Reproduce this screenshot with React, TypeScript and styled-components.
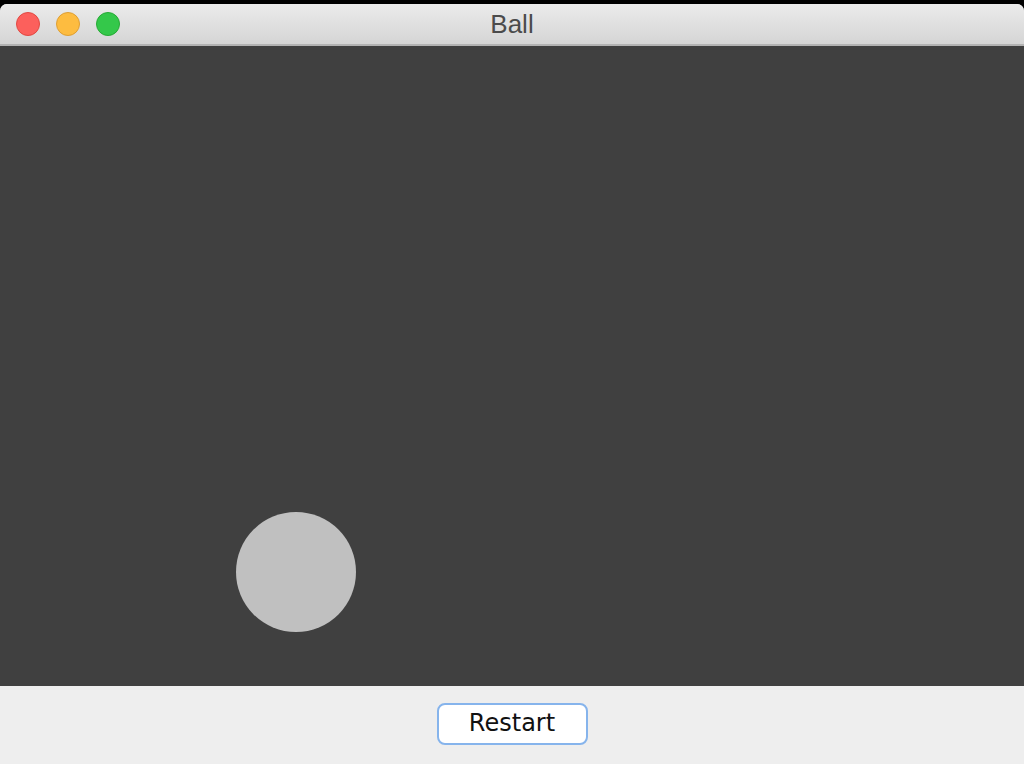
import React from 'react';
import styled, { createGlobalStyle } from 'styled-components';

const GlobalStyle = createGlobalStyle`
  html, body {
    margin: 0;
    padding: 0;
    background: #000;
    overflow: hidden;
  }
`;

const Window = styled.div`
  margin-top: 4px;
  width: 1024px;
  height: 760px;
  display: flex;
  flex-direction: column;
  border-radius: 7px 7px 0 0;
  overflow: hidden;
  background: #eeeeee;
`;

const TitleBar = styled.div`
  position: relative;
  height: 40px;
  flex-shrink: 0;
  display: flex;
  align-items: center;
  justify-content: center;
  background: linear-gradient(#ebebeb, #d5d5d5);
  border-bottom: 2px solid #b3b3b3;
`;

const Lights = styled.div`
  position: absolute;
  left: 16px;
  top: 8px;
  display: flex;
  gap: 16px;
`;

const Light = styled.span<{ $fill: string; $edge: string }>`
  width: 24px;
  height: 24px;
  border-radius: 50%;
  box-sizing: border-box;
  background: ${({ $fill }) => $fill};
  border: 1px solid ${({ $edge }) => $edge};
`;

const Title = styled.div`
  font-family: 'Liberation Sans', Arial, sans-serif;
  font-size: 26px;
  color: #4b4b4b;
  margin-top: 1px;
`;

const Canvas = styled.div`
  position: relative;
  height: 640px;
  flex-shrink: 0;
  background: #404040;
`;

const Ball = styled.div`
  position: absolute;
  border-radius: 50%;
  background: #c0c0c0;
`;

const Footer = styled.div`
  flex: 1;
  display: flex;
  justify-content: center;
  padding-top: 17px;
  background: #eeeeee;
`;

const Button = styled.button`
  width: 151px;
  height: 42px;
  box-sizing: border-box;
  border: 2px solid #86b4ec;
  border-radius: 8px;
  background: #fff;
  font-family: 'DejaVu Sans', 'Lucida Grande', sans-serif;
  font-size: 24px;
  color: #111;
  padding: 0 0 2px;
  cursor: pointer;
`;

export default function App() {
  const ball = { x: 236, y: 466, size: 120 };

  return (
    <>
      <GlobalStyle />
      <Window>
        <TitleBar>
          <Lights>
            <Light $fill="#fc605c" $edge="#e14942" />
            <Light $fill="#fdbc40" $edge="#de9f34" />
            <Light $fill="#34c84a" $edge="#27aa35" />
          </Lights>
          <Title>Ball</Title>
        </TitleBar>
        <Canvas>
          <Ball
            style={{ left: ball.x, top: ball.y, width: ball.size, height: ball.size }}
          />
        </Canvas>
        <Footer>
          <Button>Restart</Button>
        </Footer>
      </Window>
    </>
  );
}
